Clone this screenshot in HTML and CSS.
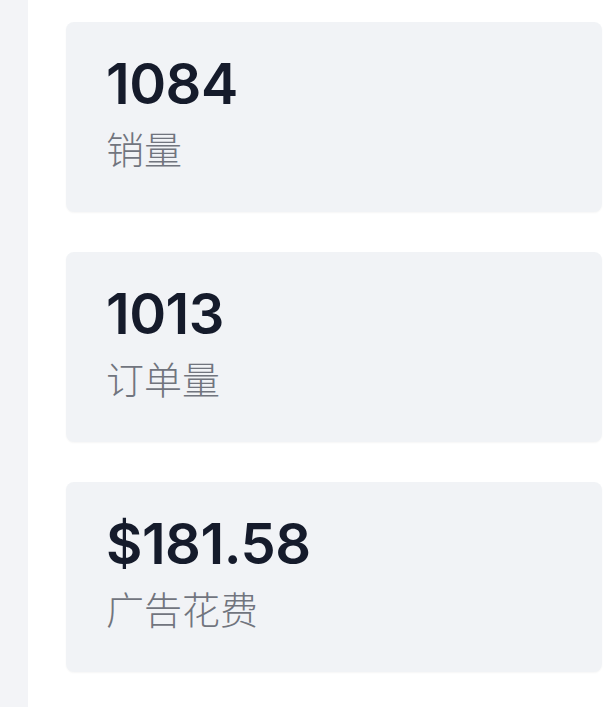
FILE: index.html
```html
<!DOCTYPE html>
<html lang="zh">
<head>
    <meta charset="UTF-8">
    <meta name="viewport" content="width=device-width, initial-scale=1.0">
    <title>广告数据</title>
    <link rel="stylesheet" href="styles.css">
</head>
<body>
    <div class="layout">
        <aside class="sidebar"></aside>
        <main class="main">
            <div class="stats">
                <div class="stat-card">
                    <div class="stat-value">1084</div>
                    <div class="stat-label">销量</div>
                </div>
                <div class="stat-card">
                    <div class="stat-value">1013</div>
                    <div class="stat-label">订单量</div>
                </div>
                <div class="stat-card">
                    <div class="stat-value">$181.58</div>
                    <div class="stat-label">广告花费</div>
                </div>
            </div>
        </main>
    </div>
</body>
</html>
```

FILE: styles.css
```css
body { margin: 0; padding: 0; font-family: Inter, "Noto Sans CJK SC", sans-serif; background-color: #ffffff; }
.layout { display: flex; min-height: 707px; }
.sidebar { width: 28px; flex-shrink: 0; background-color: #f3f4f7; }
.main { flex: 1; padding: 22px 11px 0 38px; }
.stats { display: flex; flex-direction: column; gap: 40px; }
.stat-card { height: 190px; box-sizing: border-box; padding: 31px 40px; background: #f1f3f6; border-radius: 8px; box-shadow: 0 1px 2px rgba(0,0,0,0.04); }
.stat-value { font-size: 56px; font-weight: 600; line-height: 62px; color: #151b2b; letter-spacing: -0.5px; }
.stat-label { font-size: 38px; font-weight: 300; line-height: 48px; color: #71757e; margin-top: 11px; }
```
